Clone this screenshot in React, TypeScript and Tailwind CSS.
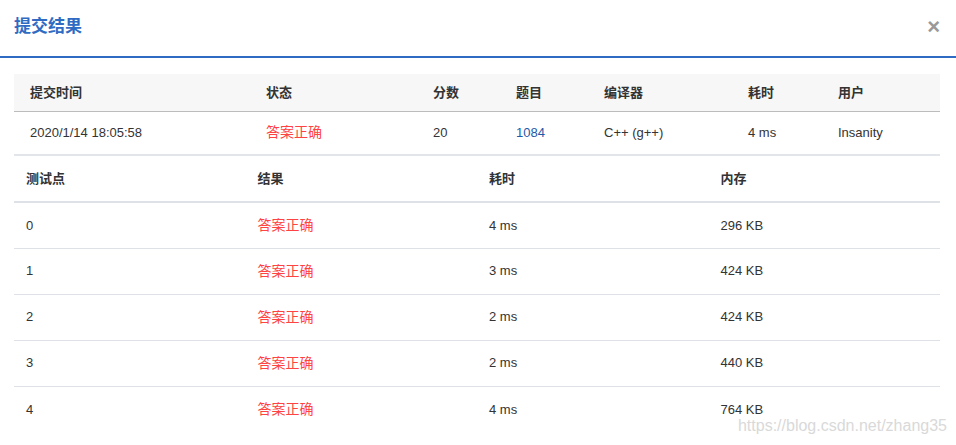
const summary = {
  time: "2020/1/14 18:05:58",
  status: "答案正确",
  score: "20",
  problem: "1084",
  compiler: "C++ (g++)",
  cost: "4 ms",
  user: "Insanity",
};

const cases = [
  { id: "0", cost: "4 ms", mem: "296 KB" },
  { id: "1", cost: "3 ms", mem: "424 KB" },
  { id: "2", cost: "2 ms", mem: "424 KB" },
  { id: "3", cost: "2 ms", mem: "440 KB" },
  { id: "4", cost: "4 ms", mem: "764 KB" },
];

export default function App() {
  return (
    <div
      className="relative w-[956px] h-[445px] bg-white text-[13px] text-[#333]"
      style={{ fontFamily: '"Liberation Sans", "Noto Sans CJK SC", sans-serif' }}
    >
      <div className="flex items-center justify-between h-[58px] pl-[14px] pr-[16px] pb-[2px] border-b-2 border-[#2f6bc3]">
        <h2 className="text-[17px] font-bold text-[#2f6bc3]">提交结果</h2>
        <button className="text-[#999] text-[22px] leading-none font-bold">×</button>
      </div>

      <div className="px-[14px] pt-[16px] w-[954px]">
        <table className="w-[926px] table-fixed border-collapse">
          <colgroup>
            <col className="w-[236px]" />
            <col className="w-[167px]" />
            <col className="w-[83px]" />
            <col className="w-[88px]" />
            <col className="w-[144px]" />
            <col className="w-[90px]" />
            <col className="w-[118px]" />
          </colgroup>
          <thead>
            <tr className="bg-[#f7f7f7] h-[37px] border-b border-[#bcbcbc] text-left font-bold">
              <th className="pl-[16px] font-bold">提交时间</th>
              <th className="pl-[16px] font-bold">状态</th>
              <th className="pl-[16px] font-bold">分数</th>
              <th className="pl-[16px] font-bold">题目</th>
              <th className="pl-[16px] font-bold">编译器</th>
              <th className="pl-[16px] font-bold">耗时</th>
              <th className="pl-[16px] font-bold">用户</th>
            </tr>
          </thead>
          <tbody>
            <tr className="h-[44px] border-b-2 border-[#e2e5e9]">
              <td className="pl-[16px]">{summary.time}</td>
              <td className="pl-[16px] text-[14px] text-[#ff4242]">{summary.status}</td>
              <td className="pl-[16px]">{summary.score}</td>
              <td className="pl-[16px] text-[#1d5aa8]">{summary.problem}</td>
              <td className="pl-[16px]">{summary.compiler}</td>
              <td className="pl-[16px]">{summary.cost}</td>
              <td className="pl-[16px]">{summary.user}</td>
            </tr>
          </tbody>
        </table>

        <table className="w-[926px] table-fixed border-collapse">
          <thead>
            <tr className="h-[46px] border-b-2 border-[#dee2e6] text-left">
              <th className="pl-[12px] font-bold">测试点</th>
              <th className="pl-[12px] font-bold">结果</th>
              <th className="pl-[12px] font-bold">耗时</th>
              <th className="pl-[12px] font-bold">内存</th>
            </tr>
          </thead>
          <tbody>
            {cases.map((c, i) => (
              <tr
                key={c.id}
                className={i < cases.length - 1 ? "h-[46px] border-b border-[#dee2e6]" : "h-[46px]"}
              >
                <td className="pl-[12px]">{c.id}</td>
                <td className="pl-[12px] text-[14px] text-[#ff4242]">答案正确</td>
                <td className="pl-[12px]">{c.cost}</td>
                <td className="pl-[12px]">{c.mem}</td>
              </tr>
            ))}
          </tbody>
        </table>
      </div>

      <span className="absolute right-[9px] bottom-[7px] text-[16px] text-[#d9d9d9]">
        https://blog.csdn.net/zhang35
      </span>
    </div>
  );
}
